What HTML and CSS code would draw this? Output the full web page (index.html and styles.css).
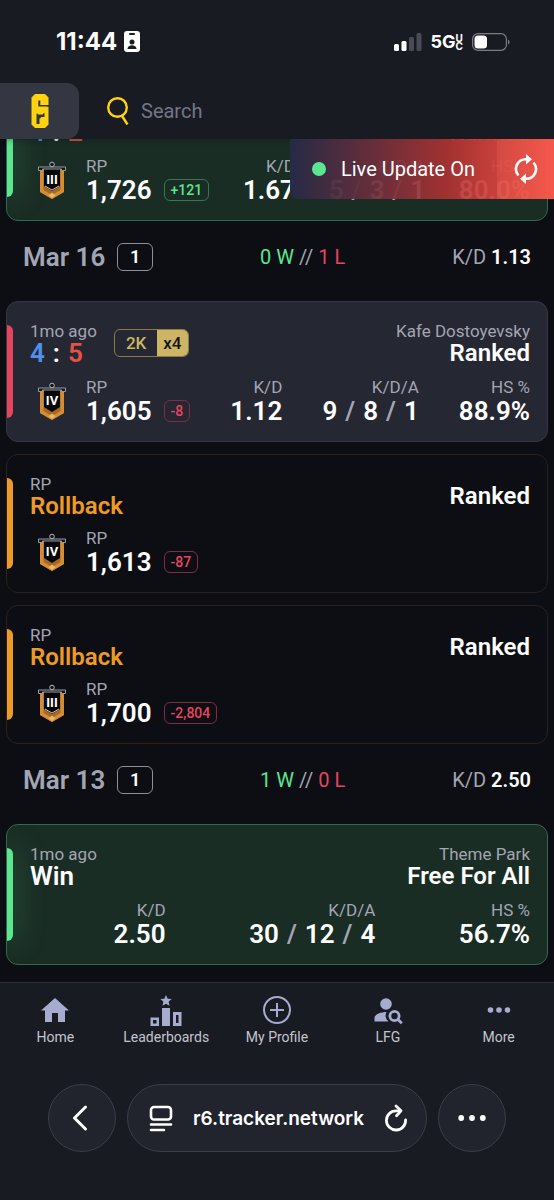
FILE: index.html
```html
<!DOCTYPE html>
<html lang="en">
<head>
    <meta charset="UTF-8">
    <meta name="viewport" content="width=device-width, initial-scale=1.0">
    <title>R6 Tracker - Matches</title>
    <link rel="stylesheet" href="styles.css">
</head>
<body>
    <!-- Shared icons -->
    <svg class="sprite" aria-hidden="true">
        <symbol id="banner" viewBox="0 0 30 38">
            <path d="M3 8h24v23l-12 7-12-7z" fill="#a9671f"/>
            <path d="M3 8h3.500v21l8.500 5 8.500-5V8H27v23l-12 7-12-7z" fill="#d28d38"/>
            <path d="M15 31.500l3.500 2.700-3.500 2.800-3.500-2.800z" fill="#eab765"/>
            <path d="M7 7h16v18l-8 5-8-5z" fill="#050608"/>
            <path d="M1.500 6h27v3.500h-4V8h-19v1.500h-4z" fill="#14161b" stroke="#9a9ca3"/>
            <circle cx="15" cy="3.500" r="2.300" fill="#14161b" stroke="#b5b7bd"/>
        </symbol>
    </svg>

    <div class="status-bar">
        <div class="status-time">
            11:44
            <svg width="16" height="21" viewBox="0 0 16 21">
                <rect width="16" height="21" rx="3" fill="#fff"/>
                <rect x="5" y="2" width="6" height="2" rx="1" fill="#191b23"/>
                <circle cx="8" cy="11" r="2.500" fill="#191b23"/>
                <path d="M3.500 18c0-5 9-5 9 0z" fill="#191b23"/>
            </svg>
        </div>
        <div class="status-icons">
            <svg width="28" height="18" viewBox="0 0 28 18">
                <rect x="0" y="11" width="5" height="7" rx="1.500" fill="#fff"/>
                <rect x="7.500" y="8" width="5" height="10" rx="1.500" fill="#fff"/>
                <rect x="15" y="4" width="5" height="14" rx="1.500" fill="#494a54"/>
                <rect x="22.500" y="0" width="5" height="18" rx="1.500" fill="#494a54"/>
            </svg>
            <span class="network">5G<span class="network-uc"><span>U</span><span>C</span></span></span>
            <svg width="38" height="18" viewBox="0 0 38 18">
                <rect x=".6" y=".6" width="33.800" height="16.800" rx="5.500" fill="none" stroke="#7b7c84" stroke-width="1.200"/>
                <rect x="2.500" y="2.500" width="12.500" height="13" rx="3.500" fill="#fff"/>
                <path d="M36 6.500c2 .8 2 4.200 0 5z" fill="#7b7c84"/>
            </svg>
        </div>
    </div>

    <header class="site-header">
        <a href="#home" class="logo" aria-label="R6 Tracker">
            <svg width="18" height="34" viewBox="0 0 18 34">
                <path d="M4.500 0h9L17 3.500v27L13.500 34h-9L1 30.500v-27z" fill="#ffd30f" stroke="#ffd30f" stroke-linejoin="round"/>
                <path d="M7.300 6.500h2V11H18v2l-3-.6H7.300z" fill="#343641"/>
                <path d="M5.500 19.500h1.200v1H12l.5-1.500h1v4H10l-.6 1.500h-.9V30h-3z" fill="#343641"/>
            </svg>
        </a>
        <label class="search">
            <svg width="22" height="28" viewBox="0 0 22 28">
                <circle cx="10.500" cy="10.500" r="9.300" fill="none" stroke="#ffd30f" stroke-width="2.400"/>
                <path d="M15 19l5.500 8.500" stroke="#ffd30f" stroke-width="2.400"/>
            </svg>
            <input type="search" placeholder="Search" aria-label="Search">
        </label>

        <div class="live">
            <span class="live-dot"></span>
            <span class="live-text">Live Update On</span>
            <button class="live-refresh" aria-label="Refresh">
                <svg width="24" height="32" viewBox="0 0 24 32" fill="none" stroke="#fff" stroke-width="2.600">
                    <path d="M4.500 22.500A9.800 9.800 0 0 1 12 6.200h2"/>
                    <path d="M19.500 9.500A9.800 9.800 0 0 1 12 25.800h-2"/>
                    <path d="M12 1l6 5.200-6 5.200zM12 20.600l-6 5.200 6 5.200z" fill="#fff" stroke="none"/>
                </svg>
            </button>
        </div>
    </header>

    <main class="feed">
        <article class="match match-win">
            <div class="match-head">
                <div>
                    <div class="label">1mo ago</div>
                    <div class="score"><span class="blue">4</span><span>:</span><span class="orange-red">2</span></div>
                </div>
                <div class="match-mode">
                    <div class="label">Bank</div>
                    <div class="title">Ranked</div>
                </div>
            </div>
            <div class="stats">
                <div class="rank">
                    <svg class="rank-icon" viewBox="0 0 30 38">
                        <use href="#banner"/>
                        <path d="M8 25l7 4 7-4" fill="none" stroke="#c9cbd1"/>
                        <text x="15" y="23">III</text>
                    </svg>
                    <div>
                        <div class="label">RP</div>
                        <div class="value">1,726 <span class="delta delta-up">+121</span></div>
                    </div>
                </div>
                <div class="stat">
                    <div class="label">K/D</div>
                    <div class="value">1.67</div>
                </div>
                <div class="stat">
                    <div class="label">K/D/A</div>
                    <div class="value">5 <i>/</i> 3 <i>/</i> 1</div>
                </div>
                <div class="stat">
                    <div class="label">HS %</div>
                    <div class="value">80.0%</div>
                </div>
            </div>
        </article>

        <div class="day">
            <h2>Mar 16 <span class="count">1</span></h2>
            <div><span class="green">0 W</span> // <span class="red">1 L</span></div>
            <div>K/D <b>1.13</b></div>
        </div>

        <article class="match match-loss">
            <div class="match-head">
                <div>
                    <div class="label">1mo ago</div>
                    <div class="score"><span class="blue">4</span><span>:</span><span class="orange-red">5</span></div>
                </div>
                <div class="multikill"><span>2K</span><span class="multikill-count">x4</span></div>
                <div class="match-mode">
                    <div class="label">Kafe Dostoyevsky</div>
                    <div class="title">Ranked</div>
                </div>
            </div>
            <div class="stats">
                <div class="rank">
                    <svg class="rank-icon" viewBox="0 0 30 38">
                        <use href="#banner"/>
                        <text x="15" y="23">IV</text>
                    </svg>
                    <div>
                        <div class="label">RP</div>
                        <div class="value">1,605 <span class="delta">-8</span></div>
                    </div>
                </div>
                <div class="stat">
                    <div class="label">K/D</div>
                    <div class="value">1.12</div>
                </div>
                <div class="stat">
                    <div class="label">K/D/A</div>
                    <div class="value">9 <i>/</i> 8 <i>/</i> 1</div>
                </div>
                <div class="stat">
                    <div class="label">HS %</div>
                    <div class="value">88.9%</div>
                </div>
            </div>
        </article>

        <article class="match match-rollback">
            <div class="match-head">
                <div>
                    <div class="label">RP</div>
                    <div class="title orange">Rollback</div>
                </div>
                <div class="match-mode">
                    <div class="title">Ranked</div>
                </div>
            </div>
            <div class="stats">
                <div class="rank">
                    <svg class="rank-icon" viewBox="0 0 30 38">
                        <use href="#banner"/>
                        <text x="15" y="23">IV</text>
                    </svg>
                    <div>
                        <div class="label">RP</div>
                        <div class="value">1,613 <span class="delta">-87</span></div>
                    </div>
                </div>
            </div>
        </article>

        <article class="match match-rollback">
            <div class="match-head">
                <div>
                    <div class="label">RP</div>
                    <div class="title orange">Rollback</div>
                </div>
                <div class="match-mode">
                    <div class="title">Ranked</div>
                </div>
            </div>
            <div class="stats">
                <div class="rank">
                    <svg class="rank-icon" viewBox="0 0 30 38">
                        <use href="#banner"/>
                        <path d="M8 25l7 4 7-4" fill="none" stroke="#c9cbd1"/>
                        <text x="15" y="23">III</text>
                    </svg>
                    <div>
                        <div class="label">RP</div>
                        <div class="value">1,700 <span class="delta">-2,804</span></div>
                    </div>
                </div>
            </div>
        </article>

        <div class="day">
            <h2>Mar 13 <span class="count">1</span></h2>
            <div><span class="green">1 W</span> // <span class="red">0 L</span></div>
            <div>K/D <b>2.50</b></div>
        </div>

        <article class="match match-win">
            <div class="match-head">
                <div>
                    <div class="label">1mo ago</div>
                    <div class="score">Win</div>
                </div>
                <div class="match-mode">
                    <div class="label">Theme Park</div>
                    <div class="title">Free For All</div>
                </div>
            </div>
            <div class="stats stats-unranked">
                <div class="stat">
                    <div class="label">K/D</div>
                    <div class="value">2.50</div>
                </div>
                <div class="stat">
                    <div class="label">K/D/A</div>
                    <div class="value">30 <i>/</i> 12 <i>/</i> 4</div>
                </div>
                <div class="stat">
                    <div class="label">HS %</div>
                    <div class="value">56.7%</div>
                </div>
            </div>
        </article>
    </main>

    <footer class="bottom">
        <nav class="tabs">
            <a href="#home">
                <svg width="32" height="32" viewBox="0 0 32 32" fill="#a6acd0">
                    <path d="M16 4l14 12.500h-4V28h-7v-9h-6v9H6V16.500H2z"/>
                </svg>
                Home
            </a>
            <a href="#leaderboards">
                <svg width="32" height="32" viewBox="0 0 32 32" fill="#a6acd0">
                    <path d="M16 1l1.600 3.700 4 .4-3 2.700.9 3.900-3.500-2-3.500 2 .9-3.900-3-2.700 4-.4z"/>
                    <path d="M12 14h8v18h-8z"/>
                    <path d="M.500 23.500H9V32H.500zM3 26v3.500h3.500V26zM23 18h8.500v14H23zM26 21v8h2.500v-8z" fill-rule="evenodd"/>
                </svg>
                Leaderboards
            </a>
            <a href="#profile">
                <svg width="32" height="32" viewBox="0 0 32 32" fill="none" stroke="#a6acd0" stroke-width="2">
                    <circle cx="16" cy="16" r="13"/>
                    <path d="M16 9v14M9 16h14"/>
                </svg>
                My Profile
            </a>
            <a href="#lfg">
                <svg width="32" height="32" viewBox="0 0 32 32" fill="#a6acd0">
                    <circle cx="14" cy="10" r="5.800"/>
                    <path d="M14.500 18A8 8 0 0 0 16.500 27.500H2.500V24c0-4 7-6 12-6z"/>
                    <circle cx="22.500" cy="22" r="4.600" fill="none" stroke="#a6acd0" stroke-width="2.800"/>
                    <path d="M25.500 25l4.300 4.300" stroke="#a6acd0" stroke-width="2.800"/>
                </svg>
                LFG
            </a>
            <a href="#more">
                <svg width="32" height="32" viewBox="0 0 32 32" fill="#a6acd0">
                    <circle cx="7.500" cy="16" r="2.800"/>
                    <circle cx="16" cy="16" r="2.800"/>
                    <circle cx="24.500" cy="16" r="2.800"/>
                </svg>
                More
            </a>
        </nav>

        <div class="browser-bar">
            <button class="round" aria-label="Back">
                <svg class="back-icon" width="16" height="26" viewBox="0 0 16 26" fill="none" stroke="#fff" stroke-width="3" stroke-linecap="round" stroke-linejoin="round">
                    <path d="M13.500 2L2.500 13l11 11"/>
                </svg>
            </button>
            <div class="address">
                <svg width="24" height="27" viewBox="0 0 24 27" fill="none" stroke="#fff" stroke-width="2.600" stroke-linecap="round">
                    <rect x="2" y="2" width="20" height="12.500" rx="3"/>
                    <path d="M2 19.500h20M2 25h13"/>
                </svg>
                <span class="url">r6.tracker.network</span>
                <button class="reload" aria-label="Reload">
                    <svg width="24" height="28" viewBox="0 0 24 28" fill="none" stroke="#fff" stroke-width="2.800" stroke-linecap="round" stroke-linejoin="round">
                        <path d="M16 6.800h-4A9.600 9.600 0 1 0 21.600 16"/>
                        <path d="M12 2l5 4.800-4.500 5"/>
                    </svg>
                </button>
            </div>
            <button class="round" aria-label="More options">
                <svg width="28" height="6" viewBox="0 0 28 6" fill="#fff">
                    <circle cx="3.200" cy="3" r="2.900"/>
                    <circle cx="14" cy="3" r="2.900"/>
                    <circle cx="24.800" cy="3" r="2.900"/>
                </svg>
            </button>
        </div>
    </footer>
</body>
</html>
```

FILE: styles.css
```css
:root {
    --bg: #0c0e13;
    --surface: #191b23;
    --card: #252732;
    --muted: #a3a5b3;
    --green: #5ce68f;
    --red: #e5455f;
    --orange: #ee9a27;
}

* {
    margin: 0;
    padding: 0;
    box-sizing: border-box;
}

body {
    display: flex;
    flex-direction: column;
    min-height: 100vh;
    font-family: Roboto, sans-serif;
    color: #fff;
    background-color: var(--bg);
    overflow-x: hidden;
}

a {
    color: inherit;
    text-decoration: none;
}

button {
    border: none;
    background: none;
    color: inherit;
    cursor: pointer;
}

svg {
    display: block;
    flex: none;
}

.sprite {
    position: absolute;
    width: 0;
    height: 0;
}

/* Phone status bar */
.status-bar {
    position: relative;
    z-index: 3;
    display: flex;
    justify-content: space-between;
    align-items: center;
    height: 83px;
    padding: 0 44px 0 56px;
    background-color: var(--surface);
    font-family: Inter, sans-serif;
    font-weight: 700;
}

.status-time {
    display: flex;
    align-items: center;
    gap: 7px;
    font-size: 24px;
}

.status-icons {
    display: flex;
    align-items: center;
    gap: 9px;
}

.network {
    display: flex;
    align-items: center;
    font-size: 18px;
}

.network-uc {
    display: flex;
    flex-direction: column;
    font-size: 10px;
    line-height: 8px;
}

/* Header */
.site-header {
    position: relative;
    z-index: 2;
    display: flex;
    height: 56px;
    background-color: var(--surface);
    box-shadow: 0 1px 6px rgba(12, 14, 19, 0.4);
}

.logo {
    display: flex;
    align-items: center;
    justify-content: center;
    width: 79px;
    background-color: #343641;
    border-radius: 0 12px 12px 0;
}

.search {
    display: flex;
    align-items: center;
    flex: 1;
    gap: 12px;
    padding: 0 28px;
}

.search input {
    flex: 1;
    min-width: 0;
    border: none;
    outline: none;
    background: none;
    color: #fff;
    font: 20px Roboto, sans-serif;
}

.search input::placeholder {
    color: #737587;
}

/* Live update toast, hangs under the header */
.live {
    position: absolute;
    top: 100%;
    right: 0;
    display: flex;
    align-items: center;
    height: 60px;
    padding-left: 22px;
    border-radius: 0 0 0 8px;
    background: linear-gradient(90deg, rgba(37, 42, 70, 0.98), rgba(176, 50, 50, 0.91) 60%, rgba(250, 84, 74, 0.97));
    overflow: hidden;
}

.live-dot {
    width: 14px;
    height: 14px;
    border-radius: 50%;
    background-color: var(--green);
}

.live-text {
    margin: 0 22px 0 15px;
    font-size: 20px;
}

.live-refresh {
    display: flex;
    align-items: center;
    justify-content: center;
    width: 57px;
    height: 100%;
    background-color: rgba(255, 110, 90, 0.2);
}

/* Match feed, scrolled a little under the header */
.feed {
    flex: 1;
    margin-top: -59px;
    padding: 0 6px 17px;
}

.match {
    position: relative;
    display: flex;
    flex-direction: column;
    gap: 12px;
    padding: 19px 17px 16px 23px;
    border: 1px solid #353744;
    border-radius: 12px;
    background-color: var(--card);
    overflow: hidden;
}

.match + .match {
    margin-top: 12px;
}

.match::before {
    content: '';
    position: absolute;
    left: 0;
    top: 23px;
    bottom: 23px;
    width: 6px;
    border-radius: 0 6px 6px 0;
    background-color: var(--red);
}

.match-win {
    border-color: #2f6a4c;
    background-color: #1a2d25;
}

.match-win::before {
    background-color: var(--green);
    box-shadow: 0 0 28px rgba(92, 230, 143, 0.5);
}

.match-rollback {
    gap: 10px;
    border-color: #2b211b;
    background-color: var(--bg);
}

.match-rollback::before {
    background-color: var(--orange);
}

.match-head {
    display: flex;
    align-items: center;
    gap: 17px;
}

.match-mode {
    margin-left: auto;
    text-align: right;
}

.label {
    font-size: 17px;
    line-height: 20px;
    color: var(--muted);
}

.title {
    font-size: 24px;
    font-weight: 600;
    line-height: 24px;
}

.score {
    display: flex;
    gap: 8px;
    font-size: 26px;
    font-weight: 600;
    line-height: 24px;
}

.stats {
    display: flex;
    justify-content: space-between;
}

.stats-unranked::before {
    content: '';
}

.stat {
    text-align: right;
}

.value {
    display: flex;
    justify-content: flex-end;
    align-items: center;
    gap: 8px;
    font-size: 26px;
    font-weight: 600;
    line-height: 28px;
}

.value i {
    font-style: normal;
    color: var(--muted);
}

.rank {
    display: flex;
    align-items: center;
    gap: 12px;
}

.rank .value {
    justify-content: flex-start;
    gap: 12px;
}

.rank-icon {
    width: 44px;
    height: 38px;
}

.rank-icon text {
    fill: #fff;
    font-size: 13px;
    font-weight: 700;
    text-anchor: middle;
}

.delta {
    padding: 0 6px;
    border: 1px solid #7d2d42;
    border-radius: 6px;
    color: var(--red);
    font-size: 14px;
    font-weight: 500;
    line-height: 20px;
}

.delta-up {
    border-color: #35784f;
    color: var(--green);
}

.multikill {
    display: flex;
    border: 1px solid #8a7b48;
    border-radius: 6px;
    color: #cdb564;
    font-size: 17px;
    font-weight: 500;
    line-height: 26px;
    overflow: hidden;
}

.multikill span {
    padding: 0 11px;
}

.multikill .multikill-count {
    padding: 0 6px;
    background-color: #cdb564;
    color: #15161b;
}

/* Day summary rows */
.day {
    display: flex;
    justify-content: space-between;
    align-items: center;
    padding: 22px 17px 30px;
    color: var(--muted);
    font-size: 20px;
}

.day h2 {
    display: flex;
    align-items: center;
    gap: 12px;
    font-size: 26px;
    font-weight: 600;
    line-height: 28px;
}

.day b {
    color: #fff;
    font-weight: 600;
}

.count {
    width: 36px;
    border: 1px solid #8d8f9b;
    border-radius: 6px;
    color: #fff;
    font-size: 18px;
    line-height: 26px;
    text-align: center;
}

.green { color: var(--green); }
.red { color: var(--red); }
.orange { color: var(--orange); }
.blue { color: #4f8fee; }
.orange-red { color: #e55246; }

/* Bottom navigation */
.bottom {
    border-top: 1px solid #2b2d38;
    background-color: var(--surface);
}

.tabs {
    display: grid;
    grid-template-columns: repeat(5, 1fr);
    padding: 11px 0 36px;
}

.tabs a {
    display: flex;
    flex-direction: column;
    align-items: center;
    color: #c3c4cc;
    font-size: 14px;
    line-height: 22px;
}

/* Browser controls */
.browser-bar {
    display: flex;
    gap: 11px;
    padding: 0 48px 49px;
}

.round {
    display: flex;
    align-items: center;
    justify-content: center;
    width: 68px;
    height: 68px;
    border: 1px solid #3b3d4b;
    border-radius: 50%;
    background-color: #21232d;
}

.back-icon {
    margin-right: 4px;
}

.address {
    display: flex;
    align-items: center;
    justify-content: space-between;
    flex: 1;
    height: 68px;
    padding: 0 18px 0 21px;
    border: 1px solid #3b3d4b;
    border-radius: 34px;
    background-color: #21232d;
}

.url {
    font-family: Inter, sans-serif;
    font-size: 19px;
    font-weight: 600;
}
```
